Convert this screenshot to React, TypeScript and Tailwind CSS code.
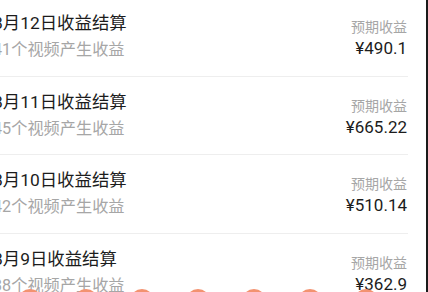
import React from "react";

const rows = [
  { title: "8月12日收益结算", sub: "41个视频产生收益", amount: "¥490.1" },
  { title: "8月11日收益结算", sub: "45个视频产生收益", amount: "¥665.22" },
  { title: "8月10日收益结算", sub: "42个视频产生收益", amount: "¥510.14" },
  { title: "8月9日收益结算", sub: "38个视频产生收益", amount: "¥362.9" },
];

const font = { fontFamily: 'Roboto, "Noto Sans CJK SC", "Noto Sans", sans-serif' };

export default function App() {
  return (
    <div
      className="relative w-[428px] h-[292px] overflow-hidden bg-white border-r-2 border-[#1a1a1a]"
      style={font}
    >
      <div className="ml-[-7px] mr-[18px] mt-[-2px] flex flex-col">
        {rows.map((r) => (
          <div
            key={r.title}
            className="h-[78.5px] shrink-0 flex items-start justify-between border-b border-[#eeeeee]"
          >
            <div className="flex flex-col pt-[13px]">
              <div className="text-[17.4px] leading-[24px] text-[#1c1c1c]">{r.title}</div>
              <div className="mt-[4px] text-[16.2px] leading-[22px] text-[#a6a6a6]">{r.sub}</div>
            </div>
            <div className="flex flex-col items-end pt-[19px] pr-[1px]">
              <div className="text-[14px] leading-[20px] text-[#a6a6a6]">预期收益</div>
              <div className="text-[17px] leading-[22px] text-[#1c1c1c]">{r.amount}</div>
            </div>
          </div>
        ))}
      </div>
      <div className="absolute left-[18px] top-[289px] flex gap-[32px]">
        {[0, 1, 2, 3, 4, 5, 6].map((i) => (
          <div key={i} className="w-[24px] h-[24px] rounded-full bg-[#f39270]" />
        ))}
      </div>
    </div>
  );
}
